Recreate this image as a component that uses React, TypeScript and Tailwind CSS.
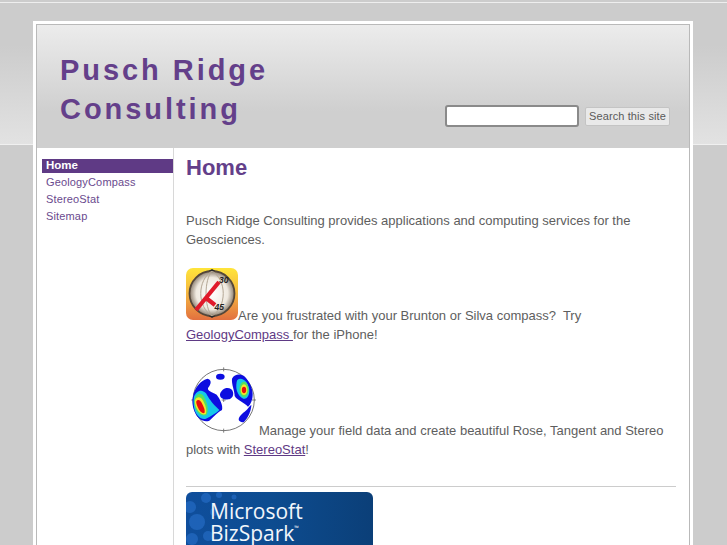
function CompassIcon() {
  return (
    <svg width="52" height="52" viewBox="0 0 52 52" className="block shrink-0">
      <defs>
        <linearGradient id="cbg" x1="0" y1="0" x2="0" y2="1">
          <stop offset="0" stopColor="#ffe53a" />
          <stop offset="0.5" stopColor="#f4b440" />
          <stop offset="1" stopColor="#e2703f" />
        </linearGradient>
        <radialGradient id="cglobe" cx="0.5" cy="0.5" r="0.52">
          <stop offset="0" stopColor="#ffffff" />
          <stop offset="0.68" stopColor="#efe9df" />
          <stop offset="1" stopColor="#7d6e5e" />
        </radialGradient>
      </defs>
      <rect x="0" y="0" width="52" height="52" rx="7" fill="url(#cbg)" />
      <circle cx="26" cy="25.5" r="22.5" fill="url(#cglobe)" stroke="#54473a" strokeWidth="1.8" />
      <path d="M26 3C11 12 11 39 26 48M26 3C41 12 41 39 26 48M26 3C18 12 18 39 26 48" fill="none" stroke="#b3a694" strokeWidth="1" />
      <path d="M22.5 3h7L26 1zM22.5 48h7L26 50z" fill="#2b2b2b" />
      <path d="M10 42L33 14" stroke="#e01a2a" strokeWidth="4.2" />
      <path d="M20 30L29 37" stroke="#e01a2a" strokeWidth="4.2" />
      <text x="33" y="14.5" fontSize="8.5" fontStyle="italic" fontWeight="700" fontFamily="Liberation Sans" fill="#222">30</text>
      <text x="28.5" y="42" fontSize="8.5" fontStyle="italic" fontWeight="700" fontFamily="Liberation Sans" fill="#222">45</text>
    </svg>
  );
}

function StereoIcon() {
  return (
    <svg width="73" height="68" viewBox="30 21 219 204" className="block shrink-0">
      <defs>
        <filter id="soft" x="-10%" y="-10%" width="120%" height="120%">
          <feGaussianBlur stdDeviation="1.6" />
        </filter>
      </defs>
      <circle cx="143" cy="120" r="92" fill="#fff" stroke="#555" strokeWidth="2.4" />
      <path d="M143 22v12M143 206v12M46 120h12M228 120h12M137 120h12M143 114v12" stroke="#666" strokeWidth="2.4" />
      <g filter="url(#soft)">
        <ellipse cx="133" cy="50" rx="13" ry="9" fill="#0a10e0" />
        <path d="M52 105C56 85 72 62 94 56C108 58 106 72 96 84C94 94 108 96 122 104C132 116 142 138 138 150C126 156 116 168 100 182C84 188 66 178 58 160C48 140 48 120 52 105Z" fill="#0a10e0" />
        <path d="M132 102C136 88 152 78 166 88C176 98 172 114 160 118C146 120 130 116 132 102Z" fill="#0a10e0" />
        <path d="M168 56C176 40 198 40 208 52C220 66 230 84 230 102C230 120 224 134 216 140C206 128 184 122 176 108C176 92 166 72 168 56Z" fill="#0a10e0" />
        <path d="M188 178C190 166 204 158 214 148C218 142 222 138 226 134C226 150 218 170 204 186C196 188 188 184 188 178Z" fill="#0a10e0" />
        <path d="M54 110C60 94 76 84 90 100C98 114 106 128 130 150C120 160 106 168 90 176C74 180 60 166 55 146C52 132 52 120 54 110Z" fill="#19c8e8" />
        <path d="M184 60C196 50 214 62 219 84C223 102 214 120 202 116C188 110 180 92 181 78C181 70 182 65 184 60Z" fill="#19c8e8" />
        <path d="M56 116C62 100 76 96 84 110C92 126 100 146 92 164C80 172 64 160 58 144C54 132 54 124 56 116Z" fill="#57e060" />
        <ellipse cx="204" cy="88" rx="14" ry="23" fill="#57e060" />
        <path d="M57 120C62 110 73 108 80 120C88 134 94 152 89 162C78 168 66 154 60 141C57 133 56 126 57 120Z" fill="#f7e62a" />
        <ellipse cx="204" cy="89" rx="10" ry="16" fill="#f7e62a" />
        <path d="M61 124C66 116 73 120 77 128C83 140 89 152 85 159C78 162 69 151 65 141C62 134 60 129 61 124Z" fill="#e81010" />
        <ellipse cx="204" cy="90" rx="6.5" ry="9.5" fill="#e81010" />
      </g>
    </svg>
  );
}

export default function App() {
  return (
    <div className="relative h-[545px] w-[727px] overflow-hidden bg-[#cccccc] font-['Liberation_Sans',Arial,sans-serif]">
      <div className="absolute inset-x-0 top-[3px] h-[141px] bg-[linear-gradient(#cccccc_0%,#cccccc_30%,#e2e2e2_100%)]" />
      <div className="absolute inset-x-0 top-[144px] h-px bg-[#f0f0f0]" />
      <div className="absolute inset-x-0 top-[2px] h-px bg-[#eeeeee]" />

      <div className="relative ml-[33px] mt-[21px] flex h-[600px] w-[660px] flex-col border-[3px] border-b-0 border-white">
        <div className="flex h-full flex-col border border-b-0 border-[#b9b9b9]">
          <header className="flex h-[123px] shrink-0 items-start justify-between bg-[linear-gradient(#ececec_0%,#cfcfcf_70%,#cfcfcf_100%)] pl-[23px] pr-[19px]">
            <h1 className="mt-[26px] w-[260px] text-[29px] font-bold leading-[39px] tracking-[2.95px] text-[#643f8a]">
              Pusch Ridge Consulting
            </h1>
            <div className="mt-[80px] flex items-center gap-[6px]">
              <div className="h-[22px] w-[134px] rounded-[3px] border-2 border-[#8a8a8a] bg-white" />
              <button className="h-[19px] w-[85px] rounded-[2px] border border-[#c4c4c4] bg-[#e9e9e9] text-[11px] leading-[17px] tracking-[0.1px] text-[#5a5a5a]">
                Search this site
              </button>
            </div>
          </header>

          <div className="flex flex-1 bg-white">
            <nav className="w-[137px] shrink-0 border-r border-[#d8d8d8] pl-[5px] pt-[11px] text-[11px] leading-[17px] tracking-[0.15px] text-[#6a4a8e]">
              <div className="h-[14px] bg-[#5f3a85] pl-[4px] text-[11.5px] font-bold leading-[13px] tracking-normal text-white">Home</div>
              <div className="mt-[1px] pl-[4px]">GeologyCompass</div>
              <div className="pl-[4px]">StereoStat</div>
              <div className="pl-[4px]">Sitemap</div>
            </nav>

            <main className="flex-1 pl-[12px] pr-[13px] text-[13px] leading-[19px] text-[#5e5e5e]">
              <h2 className="mt-[6px] text-[22px] font-bold leading-[28px] text-[#643f8a]">Home</h2>
              <p className="mt-[29px]">
                Pusch Ridge Consulting provides applications and computing services for the Geosciences.
              </p>
              <div className="mt-[19px] flex items-end">
                <CompassIcon />
                <span className="whitespace-nowrap leading-[9px]">Are you frustrated with your Brunton or Silva compass?&nbsp; Try</span>
              </div>
              <p className="mt-[5px]">
                <a className="text-[#5f3a85] underline">GeologyCompass </a>for the iPhone!
              </p>
              <div className="mt-[23px] flex items-end">
                <StereoIcon />
                <span className="whitespace-nowrap leading-[9px]">Manage your field data and create beautiful Rose, Tangent and Stereo</span>
              </div>
              <p className="mt-[5px]">
                plots with <a className="text-[#5f3a85] underline">StereoStat</a>!
              </p>
              <hr className="mt-[27px] border-t border-[#cccccc]" />
              <div className="relative mt-[5px] h-[80px] w-[187px] overflow-hidden rounded-t-[6px] bg-[linear-gradient(90deg,#0f4e9c_0%,#0d4c90_45%,#0b3f78_100%)]">
                <svg width="187" height="53" className="absolute left-0 top-0" viewBox="0 0 187 53">
                  <g fill="#2b74cf" opacity="0.55">
                    <circle cx="4" cy="15" r="6" />
                    <circle cx="20" cy="6" r="5" />
                    <circle cx="33" cy="3" r="3" />
                    <circle cx="11" cy="30" r="8" />
                    <circle cx="28" cy="20" r="4" />
                    <circle cx="6" cy="47" r="6" />
                    <circle cx="22" cy="44" r="5" />
                    <circle cx="48" cy="5" r="2.5" />
                  </g>
                </svg>
                <div className="relative pl-[24px] pt-[8px] font-['Open_Sans',sans-serif] text-[21px] leading-[22px] text-[#f2f6fb]">
                  <div>Microsoft</div>
                  <div className="flex items-start">
                    BizSpark
                    <span className="mt-[3px] text-[6px] leading-[6px]">™</span>
                  </div>
                </div>
              </div>
            </main>
          </div>
        </div>
      </div>
    </div>
  );
}
